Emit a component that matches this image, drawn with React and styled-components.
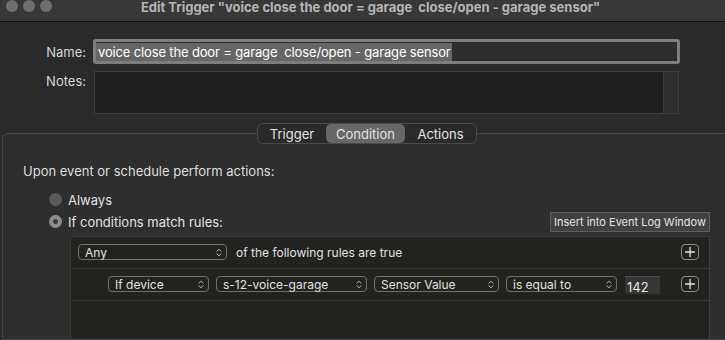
import React from "react";
import styled, { createGlobalStyle } from "styled-components";

const Global = createGlobalStyle`
  html, body { margin: 0; padding: 0; background: #2a2a2a; }
  body { font-family: Inter, "Noto Sans", "Liberation Sans", sans-serif; -webkit-font-smoothing: antialiased; }
  * { box-sizing: border-box; }
`;

const Window = styled.div`
  width: 725px;
  height: 340px;
  overflow: hidden;
  background: #2a2a2a;
  color: #dcdcdc;
  display: flex;
  flex-direction: column;
`;

const TitleBar = styled.div`
  height: 22px;
  flex: none;
  background: #383838;
  border-bottom: 1px solid #141414;
  display: flex;
  align-items: center;
  padding: 0 0 7px 6px;
`;

const Lights = styled.div`
  display: flex;
  gap: 5px;
  margin-top: -3px;
`;

const Light = styled.span`
  width: 12px;
  height: 12px;
  border-radius: 50%;
  background: #6e6e6e;
`;

const Title = styled.div`
  flex: 1;
  text-align: center;
  font-weight: 700;
  font-size: 13px;
  line-height: 15px;
  color: #b4b4b4;
  margin-right: 36px;
  white-space: pre;
`;

const Content = styled.div`
  flex: 1;
  display: flex;
  flex-direction: column;
  padding-top: 17px;
`;

const FormRow = styled.div`
  display: flex;
  align-items: flex-start;
  gap: 7px;
  margin-top: ${p => p.$mt || 0}px;
`;

const Label = styled.div`
  width: 86px;
  text-align: right;
  font-size: 13px;
  line-height: 16px;
  color: #d6d6d6;
  padding-top: ${p => p.$pt || 0}px;
`;

const NameField = styled.div`
  width: 587px;
  height: 25px;
  border: 3px solid #7e7e7e;
  border-radius: 3px;
  background: #2e2e2e;
  display: flex;
  align-items: center;
  font-size: 13px;
  color: #ffffff;
`;

const Selected = styled.span`
  background: #666666;
  padding: 1px 1px 1px 2px;
  line-height: 16px;
  letter-spacing: -0.15px;
  white-space: pre;
`;

const NotesBox = styled.div`
  margin-left: 1px;
  width: 585px;
  height: 43px;
  background: #1f1f1f;
  border: 1px solid #3c3c3c;
  display: flex;
  justify-content: flex-end;
`;

const Scroller = styled.div`
  width: 15px;
  background: #2f2f2f;
  border-left: 1px solid #3a3a3a;
`;

const TabsRow = styled.div`
  display: flex;
  justify-content: center;
  margin-top: 9px;
  padding-left: 9px;
  position: relative;
  z-index: 1;
`;

const Tabs = styled.div`
  display: flex;
  height: 21px;
  border: 1px solid #4a4a4a;
  border-radius: 6px;
  background: #2a2a2a;
  overflow: hidden;
`;

const Tab = styled.div`
  width: ${p => p.$w}px;
  display: flex;
  align-items: center;
  justify-content: center;
  font-size: 13px;
  color: #e2e2e2;
  background: ${p => (p.$active ? "#676767" : "transparent")};
  border-radius: ${p => (p.$active ? "5px" : "0")};
`;

const Box = styled.div`
  margin: -11px -10px 0 2px;
  flex: 1;
  background: #2e2e2e;
  border: 1px solid #454545;
  border-radius: 6px 6px 0 0;
  padding: 29px 24px 0 20px;
  display: flex;
  flex-direction: column;
`;

const Heading = styled.div`
  font-size: 13px;
  line-height: 16px;
  color: #dedede;
`;

const RadioRow = styled.div`
  display: flex;
  align-items: center;
  justify-content: space-between;
  height: 21px;
  margin-top: ${p => p.$mt || 0}px;
  padding-left: 26px;
`;

const RadioLabel = styled.label`
  display: flex;
  align-items: center;
  gap: 6px;
  font-size: 13px;
  color: #e0e0e0;
`;

const RadioDot = styled.span`
  width: 13px;
  height: 13px;
  border-radius: 50%;
  background: ${p => (p.$on ? "#8e8e8e" : "#5a5a5a")};
  display: flex;
  align-items: center;
  justify-content: center;
  &::after {
    content: "";
    width: 5px;
    height: 5px;
    border-radius: 50%;
    background: ${p => (p.$on ? "#3a3a3a" : "transparent")};
  }
`;

const SmallButton = styled.button`
  height: 20px;
  padding: 0 3px;
  margin-top: 1px;
  background: #414141;
  border: 1px solid #5e5e5e;
  color: #e2e2e2;
  font-family: inherit;
  font-size: 11px;
  border-radius: 0;
`;

const Rules = styled.div`
  margin: 4px 0 0 47px;
  flex: 1;
  background: #22221f;
  border-top: 1px solid #3a3a38;
  border-left: 1px solid #3a3a38;
  border-right: 1px solid #3e3e3e;
`;

const RuleRow = styled.div`
  height: 32px;
  border-bottom: 1px solid #3a3a37;
  display: flex;
  align-items: center;
  padding-left: ${p => p.$indent}px;
  padding-right: 10px;
  padding-bottom: 1px;
  gap: 7px;
`;

const Popup = styled.div`
  width: ${p => p.$w}px;
  height: 16px;
  border: 1px solid #6e6e6a;
  border-radius: 4px;
  display: flex;
  align-items: center;
  justify-content: space-between;
  padding: 0 4px 0 6px;
  font-size: 12px;
  color: #e0e0e0;
  flex: none;
`;

const RowText = styled.div`
  font-size: 12px;
  color: #e0e0e0;
  margin-left: 2px;
`;

const ValueField = styled.div`
  width: 35px;
  height: 18px;
  margin-left: 1px;
  margin-top: 2px;
  background: #353535;
  border-top: 1px solid #4a4a4a;
  font-size: 13px;
  color: #e6e6e6;
  padding: 2px 0 0 2px;
  line-height: 16px;
  flex: none;
`;

const Spacer = styled.div`
  flex: 1;
`;

const PlusButton = styled.div`
  width: 18px;
  height: 16px;
  border: 1px solid #8a8a86;
  border-radius: 4px;
  display: flex;
  align-items: center;
  justify-content: center;
  flex: none;
`;

const Chevrons = () => (
  <svg width="6" height="9" viewBox="0 0 6 9" fill="none" stroke="#bdbdbd" strokeWidth="1" strokeLinecap="round" strokeLinejoin="round">
    <path d="M1 3.2 L3 1.2 L5 3.2" />
    <path d="M1 5.8 L3 7.8 L5 5.8" />
  </svg>
);

const Plus = () => (
  <svg width="10" height="10" viewBox="0 0 10 10" stroke="#e6e6e6" strokeWidth="1.3" strokeLinecap="round">
    <path d="M5 0.5 V9.5 M0.5 5 H9.5" />
  </svg>
);

const Select = ({ w, children }) => (
  <Popup $w={w}>
    <span>{children}</span>
    <Chevrons />
  </Popup>
);

export default function App() {
  const name = "voice close the door = garage  close/open - garage sensor";
  return (
    <>
      <Global />
      <Window>
        <TitleBar>
          <Lights>
            <Light />
            <Light />
            <Light />
          </Lights>
          <Title>{`Edit Trigger "${name}"`}</Title>
        </TitleBar>
        <Content>
          <FormRow>
            <Label $pt={5}>Name:</Label>
            <NameField>
              <Selected>{name}</Selected>
            </NameField>
          </FormRow>
          <FormRow $mt={7}>
            <Label $pt={2}>Notes:</Label>
            <NotesBox>
              <Scroller />
            </NotesBox>
          </FormRow>
          <TabsRow>
            <Tabs>
              <Tab $w={68}>Trigger</Tab>
              <Tab $w={79} $active>Condition</Tab>
              <Tab $w={71}>Actions</Tab>
            </Tabs>
          </TabsRow>
          <Box>
            <Heading>Upon event or schedule perform actions:</Heading>
            <RadioRow $mt={10}>
              <RadioLabel>
                <RadioDot />
                Always
              </RadioLabel>
            </RadioRow>
            <RadioRow $mt={1}>
              <RadioLabel>
                <RadioDot $on />
                If conditions match rules:
              </RadioLabel>
              <SmallButton>Insert into Event Log Window</SmallButton>
            </RadioRow>
            <Rules>
              <RuleRow $indent={7}>
                <Select w={149}>Any</Select>
                <RowText>of the following rules are true</RowText>
                <Spacer />
                <PlusButton>
                  <Plus />
                </PlusButton>
              </RuleRow>
              <RuleRow $indent={37}>
                <Select w={101}>If device</Select>
                <Select w={151}>s-12-voice-garage</Select>
                <Select w={125}>Sensor Value</Select>
                <Select w={111}>is equal to</Select>
                <ValueField>142</ValueField>
                <Spacer />
                <PlusButton>
                  <Plus />
                </PlusButton>
              </RuleRow>
            </Rules>
          </Box>
        </Content>
      </Window>
    </>
  );
}
